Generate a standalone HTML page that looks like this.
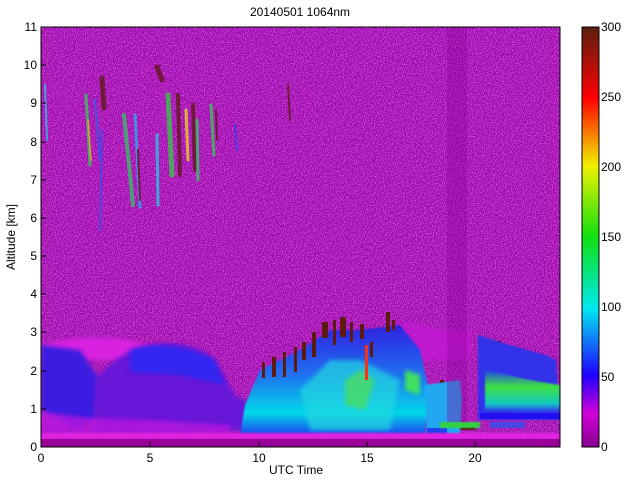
<!DOCTYPE html>
<html><head><meta charset="utf-8"><style>
html,body{margin:0;padding:0;background:#fff;width:640px;height:480px;overflow:hidden}
svg{display:block}
text{font-family:"Liberation Sans",sans-serif;font-size:12px;fill:#000}
</style></head><body>
<svg width="640" height="480" viewBox="0 0 640 480" xmlns="http://www.w3.org/2000/svg">
<defs>
<filter id="nz" x="0" y="0" width="100%" height="100%">
<feTurbulence type="fractalNoise" baseFrequency="0.9" numOctaves="1" seed="3" result="t"/>
<feColorMatrix type="matrix" values="0 0 0 0 0.85  0 0 0 0 0.1  0 0 0 0 0.9  3 0 0 0 -1.3"/>
</filter>
<filter id="bl" x="-10%" y="-10%" width="120%" height="120%"><feGaussianBlur stdDeviation="2"/></filter>
<filter id="bl1"><feGaussianBlur stdDeviation="0.8"/></filter>
<linearGradient id="cb" x1="0" y1="1" x2="0" y2="0">
<stop offset="0" stop-color="#8a0090"/>
<stop offset="0.08" stop-color="#d000d8"/>
<stop offset="0.17" stop-color="#2000ff"/>
<stop offset="0.33" stop-color="#00e8f0"/>
<stop offset="0.5" stop-color="#10e010"/>
<stop offset="0.67" stop-color="#f0f000"/>
<stop offset="0.83" stop-color="#ff0000"/>
<stop offset="1" stop-color="#5c2010"/>
</linearGradient>
<linearGradient id="bcy" x1="0" y1="0" x2="0" y2="1">
<stop offset="0" stop-color="#3020e0"/>
<stop offset="0.45" stop-color="#2070f0"/>
<stop offset="0.8" stop-color="#00d8e8"/>
<stop offset="1" stop-color="#2040f0"/>
</linearGradient>
<linearGradient id="gr" x1="0" y1="0" x2="0" y2="1">
<stop offset="0" stop-color="#2040f0"/>
<stop offset="0.4" stop-color="#40e040"/>
<stop offset="0.8" stop-color="#10c8c0"/>
<stop offset="1" stop-color="#3030f0"/>
</linearGradient>
<clipPath id="pc"><rect x="41" y="27" width="519" height="420"/></clipPath>
</defs>
<text x="300" y="16" text-anchor="middle" font-size="11">20140501 1064nm</text>
<g clip-path="url(#pc)">
<rect x="41" y="27" width="519" height="420" fill="#980ca8"/>
<rect x="41" y="27" width="519" height="420" filter="url(#nz)"/>
<!-- haze band -->
<path d="M41 345 Q100 330 150 345 L150 360 L41 360 Z" fill="#d820e0" filter="url(#bl)"/>
<path d="M400 320 L440 330 L470 330 L470 360 L420 360 Z" fill="#c818d8" filter="url(#bl)" opacity="0.7"/>
<!-- left BL -->
<path d="M41 345 L80 350 L100 380 L95 420 L75 430 L60 420 L41 410 Z" fill="#3a1ee0" filter="url(#bl)"/>
<path d="M95 380 Q120 350 150 345 Q190 338 215 360 L235 395 L262 410 L262 430 L95 432 Z" fill="#6818d8" filter="url(#bl)"/>
<path d="M130 350 Q170 338 215 360 L225 385 L180 375 L130 372 Z" fill="#3028f0" filter="url(#bl)"/>
<path d="M41 412 L90 418 L150 420 L230 425 L230 434 L41 434 Z" fill="#b818e0" filter="url(#bl)" opacity="0.8"/>
<!-- big middle BL -->
<path d="M245 405 L260 370 L300 350 L330 330 L360 330 L400 325 L420 350 L430 395 L425 435 L240 435 Z" fill="url(#bcy)" filter="url(#bl1)"/>
<path d="M300 390 L330 360 L360 360 L400 380 L390 430 L310 430 Z" fill="#20d8e0" filter="url(#bl)" opacity="0.7"/>
<path d="M345 380 L360 370 L375 380 L365 410 L345 405 Z" fill="#50e050" filter="url(#bl)" opacity="0.7"/>
<path d="M405 370 L420 375 L420 395 L405 390 Z" fill="#40e060" filter="url(#bl)"/>
<!-- dark tops -->
<g fill="#5c1a10">
<rect x="262" y="362" width="3" height="16"/><rect x="272" y="357" width="4" height="20"/>
<rect x="283" y="352" width="3" height="25"/><rect x="294" y="347" width="3" height="25"/>
<rect x="302" y="342" width="4" height="18"/><rect x="312" y="332" width="4" height="25"/>
<rect x="322" y="322" width="6" height="16"/><rect x="333" y="320" width="3" height="25"/>
<rect x="340" y="317" width="6" height="20"/><rect x="350" y="322" width="3" height="20"/>
<rect x="360" y="324" width="4" height="15"/><rect x="370" y="342" width="3" height="15"/>
<rect x="386" y="312" width="4" height="20"/><rect x="392" y="320" width="3" height="10"/>
<rect x="440" y="380" width="4" height="12"/>
<rect x="447" y="425" width="28" height="5"/>
<rect x="483" y="341" width="18" height="4"/><rect x="502" y="346" width="6" height="12"/>
<rect x="515" y="372" width="4" height="12"/><rect x="528" y="377" width="4" height="16"/>
<rect x="540" y="367" width="4" height="20"/>
</g>
<rect x="365" y="345" width="3" height="35" fill="#ff3010"/>
<!-- 17.5-19h -->
<path d="M425 385 L460 380 L462 400 L460 435 L427 438 Z" fill="#20a8f0" filter="url(#bl1)"/>
<rect x="427" y="428" width="20" height="10" fill="#2040f0"/>
<rect x="440" y="422" width="40" height="6" fill="#30d040" filter="url(#bl1)"/>
<!-- dark strip 19-20 -->
<rect x="447" y="27" width="20" height="395" fill="#8a0098" opacity="0.35"/>
<!-- right BL -->
<path d="M478 335 L510 345 L545 355 L556 360 L560 420 L478 420 Z" fill="#3030e8" filter="url(#bl1)"/>
<path d="M485 370 L530 380 L560 385 L560 412 L485 410 Z" fill="url(#gr)" filter="url(#bl1)"/>
<rect x="480" y="413" width="80" height="6" fill="#2010f0"/>
<rect x="490" y="422" width="35" height="6" fill="#3050f0" opacity="0.8"/>
<!-- ground band -->
<rect x="41" y="433" width="519" height="6" fill="#e020e0" filter="url(#bl1)"/>
<rect x="41" y="439" width="519" height="8" fill="#980098"/>
<!-- cirrus -->
<g stroke-linecap="round" fill="none" opacity="0.75">
<path d="M45 85 L47 140" stroke="#20c8e0" stroke-width="2"/>
<path d="M86 95 L90 165" stroke="#30d050" stroke-width="3"/>
<path d="M88 120 L91 160" stroke="#f0d000" stroke-width="1.5"/>
<path d="M102 78 L104 108" stroke="#5c1a10" stroke-width="5"/>
<path d="M95 100 L100 160" stroke="#2060f0" stroke-width="2"/>
<path d="M124 115 L133 205" stroke="#30c860" stroke-width="4"/>
<path d="M135 115 L140 207" stroke="#20b0f0" stroke-width="3"/>
<path d="M138 150 L140 200" stroke="#5c1a10" stroke-width="2"/>
<path d="M157 135 L158 205" stroke="#20d0e0" stroke-width="3"/>
<path d="M168 95 L172 175" stroke="#30d040" stroke-width="5"/>
<path d="M178 95 L180 175" stroke="#5c1a10" stroke-width="4"/>
<path d="M186 110 L188 160" stroke="#f0e010" stroke-width="3"/>
<path d="M193 105 L195 170" stroke="#5c1a10" stroke-width="4"/>
<path d="M197 120 L198 180" stroke="#30d060" stroke-width="3"/>
<path d="M211 105 L214 155" stroke="#30d050" stroke-width="3"/>
<path d="M216 110 L217 140" stroke="#5c1a10" stroke-width="2"/>
<path d="M100 230 L102 130" stroke="#3050f0" stroke-width="2"/>
<path d="M157 67 L162 80" stroke="#5c1a10" stroke-width="5"/>
<path d="M235 125 L237 150" stroke="#3040f0" stroke-width="2"/>
<path d="M288 85 L290 120" stroke="#5c1a10" stroke-width="2"/>
</g>
</g>
<rect x="41" y="27" width="519" height="420" fill="none" stroke="#000" stroke-width="1"/>
<g stroke="#000" stroke-width="1">
<path d="M41 447v-5M150 447v-5M259 447v-5M367 447v-5M475 447v-5"/>
<path d="M41 447h5M41 409h5M41 371h5M41 332h5M41 294h5M41 256h5M41 218h5M41 180h5M41 142h5M41 103h5M41 65h5M41 27h5"/>
</g>
<g text-anchor="end" font-size="11">
<text x="37" y="451">0</text><text x="37" y="413">1</text><text x="37" y="375">2</text><text x="37" y="336">3</text><text x="37" y="298">4</text><text x="37" y="260">5</text><text x="37" y="222">6</text><text x="37" y="184">7</text><text x="37" y="146">8</text><text x="37" y="107">9</text><text x="37" y="69">10</text><text x="37" y="31">11</text>
</g>
<g text-anchor="middle" font-size="11">
<text x="41" y="462">0</text><text x="150" y="462">5</text><text x="259" y="462">10</text><text x="367" y="462">15</text><text x="475" y="462">20</text>
</g>
<text x="296" y="474" text-anchor="middle" font-size="12">UTC Time</text>
<text transform="translate(15,237) rotate(-90)" text-anchor="middle" font-size="12">Altitude [km]</text>
<rect x="582" y="27" width="17" height="420" fill="url(#cb)" stroke="#000"/>
<g text-anchor="start" font-size="11">
<text x="601" y="31">300</text><text x="601" y="101">250</text><text x="601" y="171">200</text><text x="601" y="241">150</text><text x="601" y="311">100</text><text x="601" y="381">50</text><text x="601" y="451">0</text>
</g>
</svg>
</body></html>
